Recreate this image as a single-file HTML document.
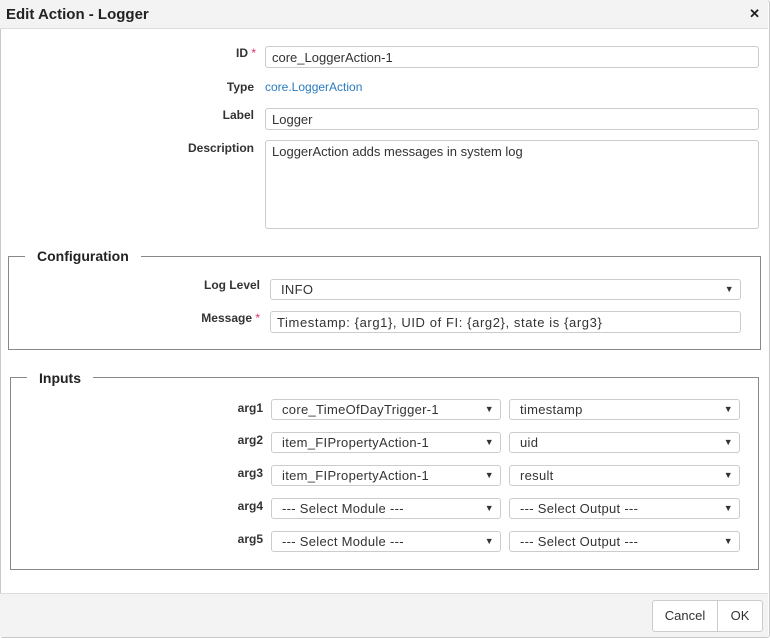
<!DOCTYPE html>
<html><head><style>
*{box-sizing:border-box;margin:0;padding:0}
body{width:770px;height:638px;background:#fff;font-family:"Liberation Sans",sans-serif;font-size:13px;color:#333;position:relative;overflow:hidden}
.dlg{position:absolute;left:0;top:0;width:770px;height:638px;border:1px solid #c8c8c8;border-radius:3px}
.title{position:absolute;left:0;top:0;width:768px;height:29px;background:#f3f3f3;border-bottom:1px solid #ddd;font-weight:bold;font-size:15px;padding:6px 0 0 6px;color:#222}
.x{position:absolute;right:8px;top:6px;font-size:13px;font-weight:bold}
.foot{position:absolute;left:0;top:593px;width:768px;height:44px;background:#f3f3f3;border-top:1px solid #ddd}
.a{position:absolute}
.lbl{position:absolute;font-weight:bold;font-size:12px;text-align:right;color:#333}
.req{color:#e0306a;font-weight:normal}
.in{position:absolute;border:1px solid #ccc;border-radius:3px;background:#fff;height:22px;padding:3px 6px;font-size:13px;color:#333;white-space:nowrap;overflow:hidden}
.sel{position:absolute;border:1px solid #ccc;border-radius:3px;background:#fff;height:21px;padding:2px 10px;font-size:13px;white-space:nowrap;letter-spacing:0.3px}
.sel:after{content:"▼";position:absolute;right:6px;top:4px;font-size:9px;color:#333}
fieldset{position:absolute;border:1px solid #888;border-radius:0}
.leg{position:absolute;background:#fff;padding:0 12px;font-weight:bold;font-size:14px;color:#222}
.btn{position:absolute;top:600px;height:32px;border:1px solid #ccc;background:#fff;font-size:13px;text-align:center;line-height:30px}
</style></head><body>
<div class="dlg"></div>
<div class="title">Edit Action - Logger<span class="x">✕</span></div>

<div class="lbl" style="right:514px;top:46px">ID <span class="req">*</span></div>
<div class="in" style="left:265px;top:46px;width:494px">core_LoggerAction-1</div>
<div class="lbl" style="right:516px;top:80px">Type</div>
<div class="a" style="left:265px;top:80px;color:#2a7ac0;font-size:12px">core.LoggerAction</div>
<div class="lbl" style="right:516px;top:108px">Label</div>
<div class="in" style="left:265px;top:108px;width:494px">Logger</div>
<div class="lbl" style="right:516px;top:141px">Description</div>
<div class="in" style="left:265px;top:140px;width:494px;height:89px">LoggerAction adds messages in system log</div>

<fieldset style="left:8px;top:256px;width:753px;height:94px"></fieldset>
<div class="leg" style="left:25px;top:248px">Configuration</div>
<div class="lbl" style="right:510px;top:278px">Log Level</div>
<div class="sel" style="left:270px;top:279px;width:471px">INFO</div>
<div class="lbl" style="right:510px;top:311px">Message <span class="req">*</span></div>
<div class="in" style="left:270px;top:311px;width:471px;height:22px;letter-spacing:0.6px">Timestamp: {arg1}, UID of FI: {arg2}, state is {arg3}</div>

<fieldset style="left:10px;top:377px;width:749px;height:193px"></fieldset>
<div class="leg" style="left:27px;top:370px">Inputs</div>

<div class="lbl" style="right:507px;top:401px">arg1</div>
<div class="sel" style="left:271px;top:399px;width:230px">core_TimeOfDayTrigger-1</div>
<div class="sel" style="left:509px;top:399px;width:231px">timestamp</div>
<div class="lbl" style="right:507px;top:433px">arg2</div>
<div class="sel" style="left:271px;top:432px;width:230px">item_FIPropertyAction-1</div>
<div class="sel" style="left:509px;top:432px;width:231px">uid</div>
<div class="lbl" style="right:507px;top:466px">arg3</div>
<div class="sel" style="left:271px;top:465px;width:230px">item_FIPropertyAction-1</div>
<div class="sel" style="left:509px;top:465px;width:231px">result</div>
<div class="lbl" style="right:507px;top:499px">arg4</div>
<div class="sel" style="left:271px;top:498px;width:230px">--- Select Module ---</div>
<div class="sel" style="left:509px;top:498px;width:231px">--- Select Output ---</div>
<div class="lbl" style="right:507px;top:532px">arg5</div>
<div class="sel" style="left:271px;top:531px;width:230px">--- Select Module ---</div>
<div class="sel" style="left:509px;top:531px;width:231px">--- Select Output ---</div>

<div class="foot"></div>
<div class="btn" style="left:652px;width:66px;border-radius:3px 0 0 3px">Cancel</div>
<div class="btn" style="left:717px;width:46px;border-radius:0 3px 3px 0">OK</div>
</body></html>
